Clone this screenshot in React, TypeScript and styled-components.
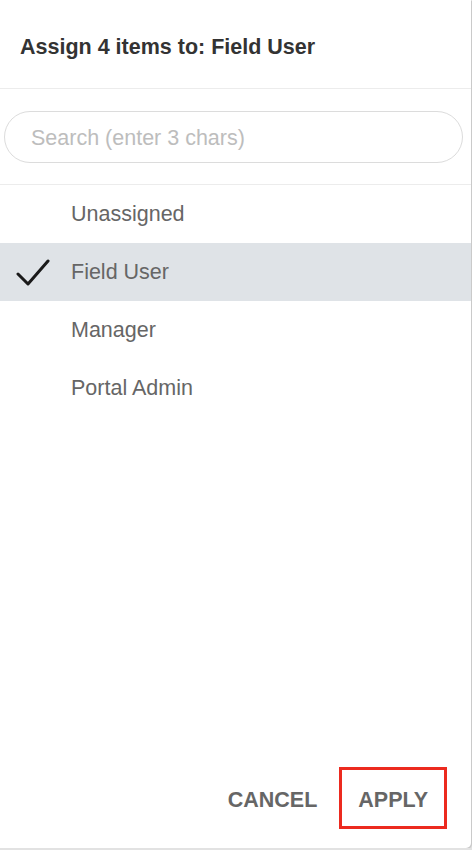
import styled, { createGlobalStyle } from "styled-components";

const GlobalStyle = createGlobalStyle`
  html, body {
    margin: 0;
    padding: 0;
    background: #e2e2e2;
  }
  * {
    box-sizing: border-box;
  }
`;

const roles = ["Unassigned", "Field User", "Manager", "Portal Admin"];

const Panel = styled.div`
  width: 471px;
  height: 848px;
  background: #fff;
  border-radius: 0 0 5px 0;
  box-shadow: 1px 1px 1px rgba(0, 0, 0, 0.12);
  display: flex;
  flex-direction: column;
  font-family: "Liberation Sans", Arial, sans-serif;
`;

const Header = styled.div`
  height: 89px;
  padding: 6px 20px 0;
  display: flex;
  align-items: center;
  border-bottom: 1px solid #ececec;

  h2 {
    margin: 0;
    font-size: 21.5px;
    font-weight: 700;
    color: #333;
  }
`;

const SearchRow = styled.div`
  height: 96px;
  padding: 0 8px 0 4px;
  display: flex;
  align-items: center;
  border-bottom: 1px solid #ececec;
`;

const SearchInput = styled.input`
  width: 100%;
  height: 52px;
  border: 1px solid #dcdcdc;
  border-radius: 26px;
  padding: 3px 26px 0;
  font-family: "Liberation Sans", Arial, sans-serif;
  font-size: 21.5px;
  color: #333;
  outline: none;

  &::placeholder {
    color: #bdbdbd;
  }
`;

const List = styled.ul`
  list-style: none;
  margin: 0;
  padding: 0;
  flex: 1;
`;

const Item = styled.li<{ $selected: boolean }>`
  height: 58px;
  display: flex;
  align-items: center;
  padding-left: 16px;
  background: ${(p) => (p.$selected ? "#dfe3e7" : "transparent")};
  color: #666;
  font-size: 21.5px;
`;

const CheckSlot = styled.span`
  width: 55px;
  height: 30px;
  display: flex;
  align-items: center;
`;

const Footer = styled.div`
  height: 92px;
  display: flex;
  align-items: center;
  justify-content: flex-end;
  padding: 0 24px 8px 0;
  gap: 3px;
`;

const ActionButton = styled.button<{ $focused?: boolean }>`
  background: none;
  border: 3px solid ${(p) => (p.$focused ? "#ec2a1f" : "transparent")};
  height: 62px;
  padding: 5px 16px 0;
  font-family: "Liberation Sans", Arial, sans-serif;
  font-size: 21.5px;
  font-weight: 700;
  color: #666;
`;

const Check = () => (
  <svg width="34" height="30" viewBox="0 0 34 30">
    <path
      d="M2 17 L12 27 L32 4"
      fill="none"
      stroke="#1a1a1a"
      strokeWidth="3"
      strokeLinecap="round"
      strokeLinejoin="round"
    />
  </svg>
);

export default function App() {
  return (
    <>
      <GlobalStyle />
      <Panel>
        <Header>
          <h2>Assign 4 items to: Field User</h2>
        </Header>
        <SearchRow>
          <SearchInput placeholder="Search (enter 3 chars)" />
        </SearchRow>
        <List>
          {roles.map((r) => (
            <Item key={r} $selected={r === "Field User"}>
              <CheckSlot>{r === "Field User" && <Check />}</CheckSlot>
              {r}
            </Item>
          ))}
        </List>
        <Footer>
          <ActionButton>CANCEL</ActionButton>
          <ActionButton $focused>APPLY</ActionButton>
        </Footer>
      </Panel>
    </>
  );
}
